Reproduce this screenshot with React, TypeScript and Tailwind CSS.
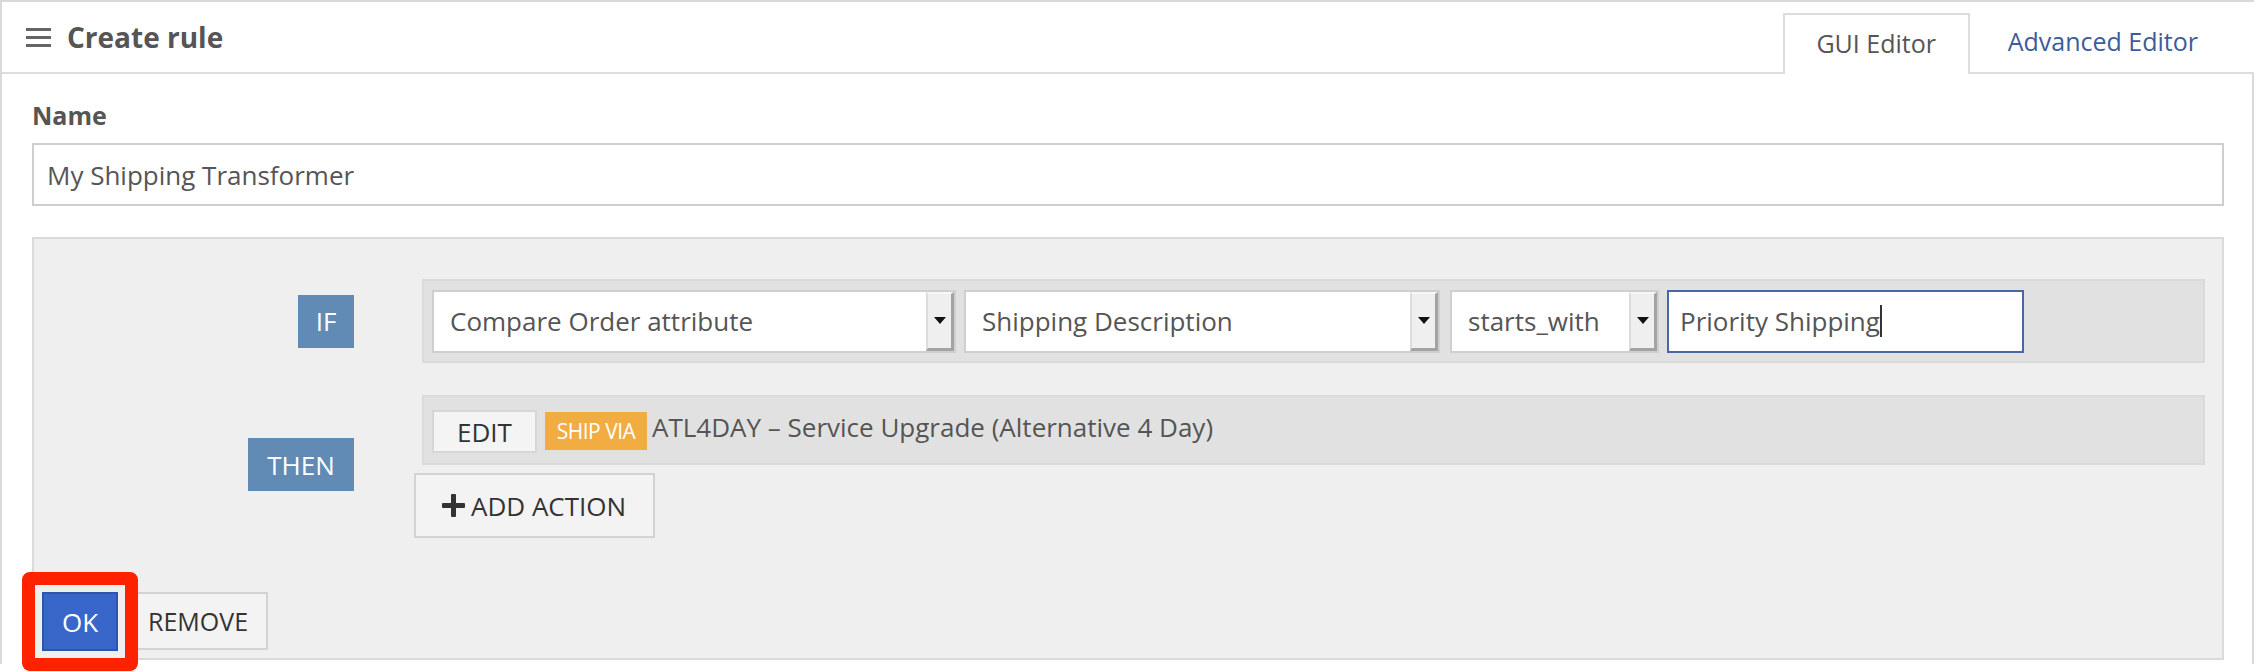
import React from 'react';

const font = { fontFamily: '"Open Sans", "Liberation Sans", sans-serif' };

function Arrow() {
  return (
    <div className="flex h-full w-[28px] shrink-0 items-center justify-center border-t-2 border-l-2 border-r-[3px] border-b-[3px] border-t-[#f7f7f7] border-l-[#dcdcdc] border-r-[#a3a3a3] border-b-[#a3a3a3] bg-[#efefef]">
      <svg width="12" height="7" viewBox="0 0 12 7">
        <polygon points="0,0 12,0 6,7" fill="#111" />
      </svg>
    </div>
  );
}

function Select({ value, width }: { value: string; width: string }) {
  return (
    <div className={`flex h-[63px] shrink-0 items-stretch border-2 border-[#cfcfcf] bg-white ${width}`}>
      <div className="flex flex-1 items-center pl-[16px] text-[26px] leading-[34px] text-[#555]">{value}</div>
      <Arrow />
    </div>
  );
}

function Label({ text, width }: { text: string; width: string }) {
  return (
    <div className={`flex h-[53px] items-center justify-center bg-[#618bb5] text-[26px] leading-[34px] text-white ${width}`}>
      {text}
    </div>
  );
}

export default function App() {
  return (
    <div className="min-h-[672px] bg-white" style={font}>
      <div className="w-[2254px] border-l-2 border-t-2 border-[#d9d9d9]">
        {/* header */}
        <div className="flex h-[72px] items-stretch justify-between border-b-2 border-[#dddddd]">
          <div className="flex items-center pl-[24px]">
            <div className="flex w-[25px] flex-col gap-[5px]">
              <span className="h-[3px] bg-[#666]" />
              <span className="h-[3px] bg-[#666]" />
              <span className="h-[3px] bg-[#666]" />
            </div>
            <h1 className="ml-[16px] text-[28px] font-bold leading-[37px] text-[#555]">Create rule</h1>
          </div>
          <div className="mr-[24px] flex items-end">
            <div className="-mb-[2px] flex h-[61px] w-[187px] justify-center border-2 border-b-0 border-[#dddddd] bg-white pt-[11px] text-[25px] leading-[34px] text-[#555]">
              GUI Editor
            </div>
            <div className="flex h-[61px] items-start pl-[38px] pr-[32px] pt-[13px] text-[25px] leading-[34px] text-[#3d5c9b]">
              Advanced Editor
            </div>
          </div>
        </div>

        {/* body */}
        <div className="border-r-2 border-[#d9d9d9] pb-[4px] pl-[30px] pr-[28px] pt-[24px]">
          <div className="text-[25px] font-bold leading-[34px] text-[#555]">Name</div>
          <div className="mt-[11px] flex h-[63px] items-center border-2 border-[#cfcfcf] pl-[13px] text-[26px] leading-[34px] text-[#555]">
            My Shipping Transformer
          </div>

          {/* rule box */}
          <div className="mt-[31px] border-2 border-[#dadada] bg-[#efefef] pb-[7px] pr-[17px] pt-[40px]">
            {/* IF */}
            <div className="flex items-center">
              <div className="flex w-[320px] shrink-0 justify-end">
                <Label text="IF" width="w-[56px]" />
              </div>
              <div className="ml-[68px] flex h-[84px] flex-1 items-center border-2 border-[#dadada] bg-[#e1e1e1] pl-[8px]">
                <Select value="Compare Order attribute" width="w-[524px]" />
                <div className="ml-[8px]">
                  <Select value="Shipping Description" width="w-[476px]" />
                </div>
                <div className="ml-[10px]">
                  <Select value="starts_with" width="w-[209px]" />
                </div>
                <div className="ml-[8px] flex h-[63px] w-[357px] items-center border-2 border-[#4a67a1] bg-white pl-[11px] text-[26px] leading-[34px] text-[#555]">
                  Priority Shipping
                  <span className="h-[32px] w-[2px] bg-[#333]" />
                </div>
              </div>
            </div>

            {/* THEN */}
            <div className="mt-[32px] flex items-center">
              <div className="mb-[4px] flex w-[320px] shrink-0 justify-end">
                <Label text="THEN" width="w-[106px]" />
              </div>
              <div className="ml-[68px] flex flex-1 flex-col items-start">
                <div className="flex h-[70px] w-full items-start border-2 border-[#dadada] bg-[#e1e1e1] pl-[8px]">
                  <button className="mt-[13px] flex h-[43px] w-[105px] items-center justify-center border-2 border-[#d6d6d6] bg-[#f4f4f4] text-[26px] leading-[34px] text-[#333]">
                    EDIT
                  </button>
                  <span className="ml-[8px] mt-[15px] flex h-[38px] w-[102px] items-center justify-center bg-[#f2ad42] text-[21px] leading-[28px] tracking-[-0.5px] text-white">
                    SHIP VIA
                  </span>
                  <span className="ml-[5px] mt-[13px] text-[26px] leading-[34px] text-[#555]">
                    ATL4DAY – Service Upgrade (Alternative 4 Day)
                  </span>
                </div>
                <button className="-ml-[8px] mt-[8px] flex h-[65px] w-[241px] items-center gap-[6px] border-2 border-[#d3d3d3] bg-[#f3f3f3] pl-[26px] text-[26px] leading-[34px] text-[#333]">
                  <svg width="23" height="23" viewBox="0 0 23 23">
                    <rect x="9" y="0" width="5" height="23" rx="1" fill="#333" />
                    <rect x="0" y="9" width="23" height="5" rx="1" fill="#333" />
                  </svg>
                  ADD ACTION
                </button>
              </div>
            </div>

            {/* footer buttons */}
            <div className="mt-[54px] flex items-start pl-[8px]">
              <div className="relative">
                <button className="flex h-[59px] w-[76px] items-center justify-center border-2 border-[#2d55ac] bg-[#3967c9] text-[26px] leading-[34px] text-white">
                  OK
                </button>
                <span className="pointer-events-none absolute -inset-[20px] rounded-[8px] border-[13px] border-[#ff2200]" />
              </div>
              <button className="ml-[10px] flex h-[58px] w-[140px] items-center justify-center border-2 border-[#d3d3d3] bg-[#f3f3f3] text-[25px] leading-[34px] text-[#333]">
                REMOVE
              </button>
            </div>
          </div>
        </div>
      </div>
    </div>
  );
}
